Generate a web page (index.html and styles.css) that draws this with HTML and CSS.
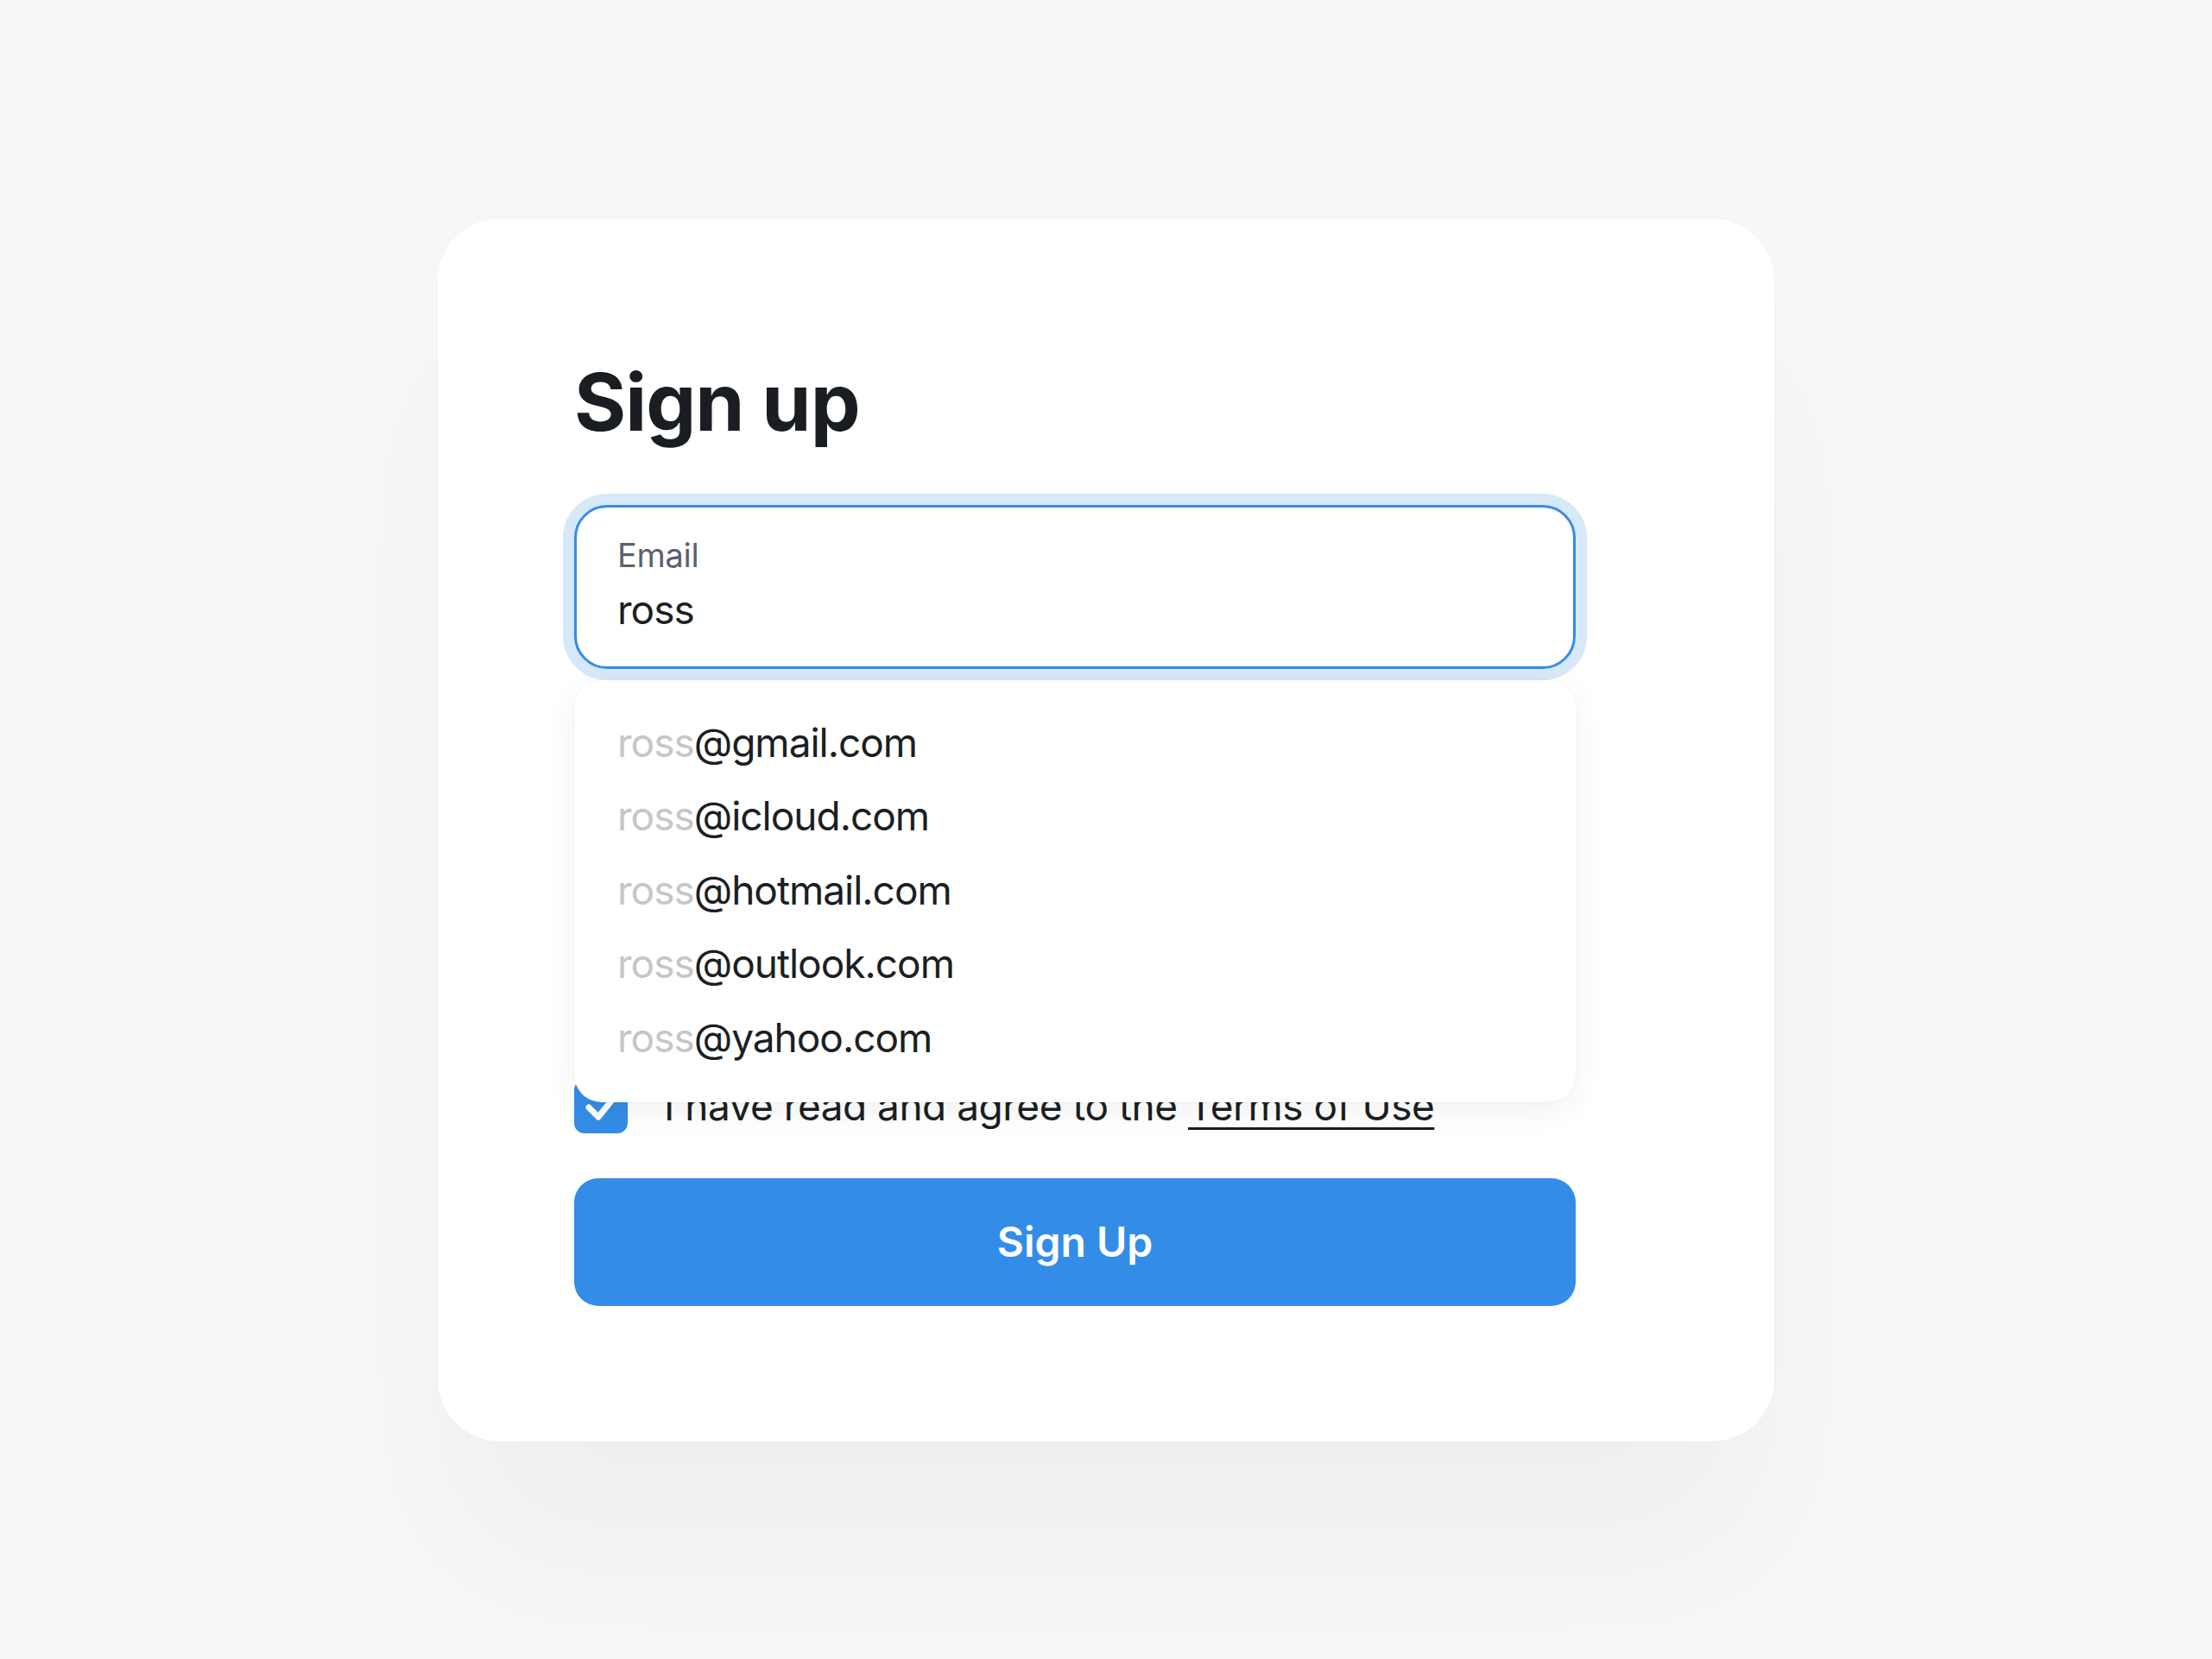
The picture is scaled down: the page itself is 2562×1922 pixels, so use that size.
FILE: index.html
```html
<!DOCTYPE html>
<html lang="en">
<head>
<meta charset="utf-8">
<title>Sign up</title>
<link rel="stylesheet" href="styles.css">
</head>
<body>
<main class="page">
  <form class="card">
    <h1 class="title">Sign up</h1>
    <div class="email-wrap">
      <label class="field field--focus">
        <span class="field-label">Email</span>
        <span class="field-value">ross</span>
      </label>
      <ul class="suggest">
        <li class="suggest-item"><span class="typed">ross</span>@gmail.com</li>
        <li class="suggest-item"><span class="typed">ross</span>@icloud.com</li>
        <li class="suggest-item"><span class="typed">ross</span>@hotmail.com</li>
        <li class="suggest-item"><span class="typed">ross</span>@outlook.com</li>
        <li class="suggest-item"><span class="typed">ross</span>@yahoo.com</li>
      </ul>
    </div>
    <div class="agree">
      <span class="checkbox">
        <svg viewBox="0 0 62 62" width="62" height="62" aria-hidden="true">
          <path d="M17 32 L28 43 L45 22" fill="none" stroke="#ffffff" stroke-width="7" stroke-linecap="round" stroke-linejoin="round"/>
        </svg>
      </span>
      <span class="agree-text">I have read and agree to the <a class="terms" href="#">Terms of Use</a></span>
    </div>
    <button class="submit" type="button">Sign Up</button>
  </form>
</main>
</body>
</html>
```

FILE: styles.css
```css
* {
  box-sizing: border-box;
}

html, body {
  margin: 0;
  padding: 0;
}

body {
  background: #f7f7f7;
  font-family: Inter, "Noto Sans", "Liberation Sans", sans-serif;
  color: #1b1f23;
}

.page {
  min-height: 100vh;
  display: flex;
  align-items: center;
  justify-content: center;
}

.card {
  width: 1548px;
  padding: 158px 230px 157px 158px;
  background: #ffffff;
  border-radius: 72px;
  box-shadow: 0 0 0 1px rgba(0, 0, 0, 0.012), 0 150px 190px -10px rgba(0, 0, 0, 0.035);
  display: flex;
  flex-direction: column;
}

.title {
  margin: 0 0 64px 0;
  font-size: 92px;
  line-height: 110px;
  font-weight: 700;
  letter-spacing: -1px;
  color: #1a1d21;
}

.email-wrap {
  position: relative;
  margin-bottom: 476px;
}

.field {
  display: flex;
  flex-direction: column;
  height: 190px;
  padding: 32px 47px 0 47px;
  border: 3px solid #348de6;
  border-radius: 38px;
  background: #ffffff;
}

.field--focus {
  box-shadow: 0 0 0 13px #d7e8f9;
}

.field-label {
  font-size: 38px;
  line-height: 46px;
  color: #58626f;
  letter-spacing: -0.3px;
}

.field-value {
  margin-top: 13px;
  font-size: 46px;
  line-height: 55px;
  letter-spacing: -1px;
  color: #1b1f23;
}

.suggest {
  position: absolute;
  left: 0;
  right: 0;
  top: calc(100% + 13px);
  margin: 0;
  padding: 30px 50px 32px 50px;
  list-style: none;
  background: #ffffff;
  border-radius: 32px;
  box-shadow: 0 0 0 1px rgba(0, 0, 0, 0.02), 0 10px 36px rgba(0, 0, 0, 0.06);
  z-index: 2;
}

.suggest-item {
  font-size: 46px;
  line-height: 85.5px;
  letter-spacing: -1px;
  color: #1b1f23;
}

.typed {
  color: #c6c6c6;
}

.agree {
  display: flex;
  align-items: center;
  gap: 42px;
  height: 62px;
}

.checkbox {
  flex: none;
  width: 62px;
  height: 62px;
  border-radius: 12px;
  background: #338de6;
  display: flex;
}

.agree-text {
  font-size: 46px;
  line-height: 55px;
  letter-spacing: -0.5px;
  color: #1b1f23;
  white-space: nowrap;
}

.terms {
  color: inherit;
  text-decoration: underline;
  text-decoration-thickness: 3px;
  text-underline-offset: 8px;
}

.submit {
  margin-top: 52px;
  height: 148px;
  width: 100%;
  border: none;
  border-radius: 28px;
  background: #338de6;
  color: #ffffff;
  font-family: inherit;
  font-size: 48px;
  font-weight: 600;
  cursor: pointer;
}
```
